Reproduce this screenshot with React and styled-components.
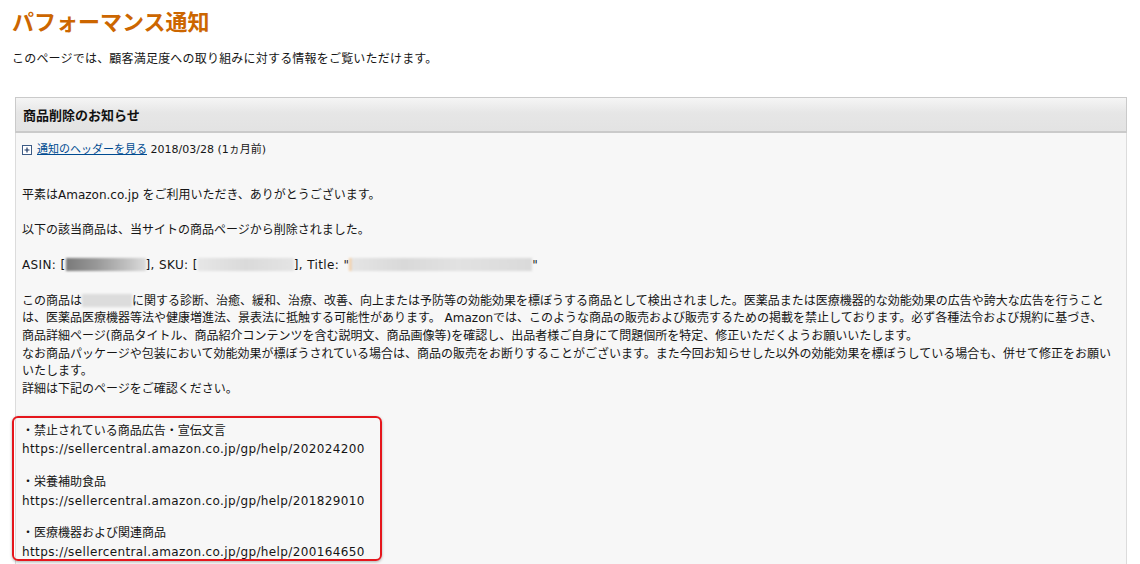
import React from 'react';
import styled, { createGlobalStyle } from 'styled-components';

const GlobalStyle = createGlobalStyle`
  body {
    margin: 0;
    background: #fff;
    color: #151515;
    font-family: "DejaVu Sans", "Noto Sans CJK JP", sans-serif;
    font-size: 12px;
  }
`

const Page = styled.div`
  padding: 7px 13px 0 12px;
`

const Title = styled.h1`
  margin: 0;
  font-family: "Noto Sans CJK JP", sans-serif;
  font-size: 22px;
  line-height: 26px;
  font-weight: 700;
  color: #cc6600;
`

const Intro = styled.p`
  margin: 16px 0 0;
  font-family: "Noto Sans CJK JP", sans-serif;
  line-height: 18px;
  letter-spacing: 0.2px;
`

const Panel = styled.section`
  margin: 30px 0 0 3px;
`

const PanelHeader = styled.div`
  height: 33px;
  line-height: 33px;
  padding: 0 7px;
  border: 1px solid #cacaca;
  border-bottom-width: 2px;
  background: linear-gradient(#f5f5f5, #e6e6e6 45%, #e3e3e3);
  font-family: "Noto Sans CJK JP", sans-serif;
  font-size: 13px;
  font-weight: 700;
  color: #111;
`

const PanelBody = styled.div`
  background: #f7f7f7;
  border: 1px solid #dcdcdc;
  border-top: 0;
  padding: 8px 6px 60px;
`

const MetaRow = styled.div`
  display: flex;
  align-items: center;
  gap: 5px;
  line-height: 18px;
  font-size: 11px;
`

const HeaderLink = styled.a`
  color: #004b91;
  text-decoration: underline;
  cursor: pointer;
`

const Letter = styled.div`
  margin-top: 27.5px;
  white-space: nowrap;
`

const Para = styled.p`
  margin: 0 0 17.7px;
  line-height: 17.7px;
  letter-spacing: ${p => (p.$latin ? '0.38px' : '0')};
`

const Masked = styled.span`
  display: inline-block;
  width: ${p => p.$w}px;
  height: 13px;
  vertical-align: -2px;
  background: ${p => p.$tone};
  filter: blur(1px);
`

/* margin collapses with the last paragraph's bottom margin */
const HelpList = styled.div`
  position: relative;
  margin-top: 23px;
`

const HelpItem = styled.div`
  line-height: 18.6px;
  margin-bottom: 14px;
`

const HelpUrl = styled.span`
  letter-spacing: 0.38px;
`

const Highlight = styled.div`
  position: absolute;
  left: -10px;
  top: -5.5px;
  width: 366px;
  height: 141px;
  border: 2px solid #e5161c;
  border-radius: 6px;
  box-shadow: 0 1px 3px rgba(0, 0, 0, 0.3);
  pointer-events: none;
`

const ExpandIcon = () => (
  <svg width="10" height="10" viewBox="0 0 10 10">
    <rect x="0.5" y="0.5" width="9" height="9" fill="#fff" stroke="#3d5b85" />
    <path d="M2.5 5h5M5 2.5v5" stroke="#1f3a66" strokeWidth="1.2" />
  </svg>
)

const helpLinks = [
  { label: '・禁止されている商品広告・宣伝文言', url: 'https://sellercentral.amazon.co.jp/gp/help/202024200' },
  { label: '・栄養補助食品', url: 'https://sellercentral.amazon.co.jp/gp/help/201829010' },
  { label: '・医療機器および関連商品', url: 'https://sellercentral.amazon.co.jp/gp/help/200164650' },
]

export default function App() {
  return (
    <Page>
      <GlobalStyle />
      <Title>パフォーマンス通知</Title>
      <Intro>このページでは、顧客満足度への取り組みに対する情報をご覧いただけます。</Intro>

      <Panel>
        <PanelHeader>商品削除のお知らせ</PanelHeader>
        <PanelBody>
          <MetaRow>
            <ExpandIcon />
            <span>
              <HeaderLink>通知のヘッダーを見る</HeaderLink> 2018/03/28 (1ヵ月前)
            </span>
          </MetaRow>

          <Letter>
            <Para>平素はAmazon.co.jp をご利用いただき、ありがとうございます。</Para>
            <Para>以下の該当商品は、当サイトの商品ページから削除されました。</Para>
            <Para $latin>
              ASIN: [<Masked $w={80} $tone="linear-gradient(90deg, #7a7a7a, #9a9a9a 40%, #c4c4c4 80%, #dcdcdc)" />], SKU: [<Masked $w={96} $tone="linear-gradient(90deg, #e6e6e6, #dadada 50%, #e4e4e4)" />], Title: "<Masked $w={183} $tone="linear-gradient(90deg, #f2cfa8 0 2px, #e4e4e4 3px, #d9d9d9 30%, #e2e2e2 60%, #dadada)" />"
            </Para>
            <Para>
              この商品は<Masked $w={50} $tone="#dcdcdc" />に関する診断、治癒、緩和、治療、改善、向上または予防等の効能効果を標ぼうする商品として検出されました。医薬品または医療機器的な効能効果の広告や誇大な広告を行うこと<br />
              は、医薬品医療機器等法や健康増進法、景表法に抵触する可能性があります。 Amazonでは、このような商品の販売および販売するための掲載を禁止しております。必ず各種法令および規約に基づき、<br />
              商品詳細ページ(商品タイトル、商品紹介コンテンツを含む説明文、商品画像等)を確認し、出品者様ご自身にて問題個所を特定、修正いただくようお願いいたします。<br />
              なお商品パッケージや包装において効能効果が標ぼうされている場合は、商品の販売をお断りすることがございます。また今回お知らせした以外の効能効果を標ぼうしている場合も、併せて修正をお願い<br />
              いたします。<br />
              詳細は下記のページをご確認ください。
            </Para>
          </Letter>

          <HelpList>
            {helpLinks.map(item => (
              <HelpItem key={item.url}>
                {item.label}<br />
                <HelpUrl>{item.url}</HelpUrl>
              </HelpItem>
            ))}
            <Highlight />
          </HelpList>
        </PanelBody>
      </Panel>
    </Page>
  );
}
